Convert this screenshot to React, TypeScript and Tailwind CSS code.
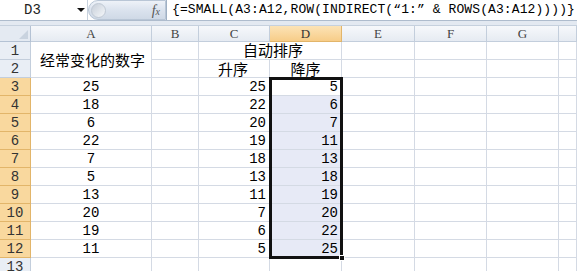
import React from "react";

const cols = ["A", "B", "C", "D", "E", "F", "G", ""];
const colA = [25, 18, 6, 22, 7, 5, 13, 20, 19, 11];
const colC = [25, 22, 20, 19, 18, 13, 11, 7, 6, 5];
const colD = [5, 6, 7, 11, 13, 18, 19, 20, 22, 25];

const cellBase = "border-r border-b border-[#d4dae4] text-[14px] leading-[18px] text-black whitespace-nowrap";
const numFont = { fontFamily: '"Liberation Mono", monospace' };
const cjkFont = { fontFamily: '"Noto Sans CJK SC", sans-serif' };

function RowHeader({ n, sel }: { n: number; sel: boolean }) {
  return (
    <div
      className={`flex items-center justify-center border-r border-b text-[14px] leading-[18px] text-[#333] ${
        sel ? "bg-[#f9d89e] border-[#e2b56a]" : "bg-[#e9eef5] border-[#c3cedc]"
      }`}
      style={numFont}
    >
      {n}
    </div>
  );
}

export default function App() {
  const rows: React.ReactNode[] = [];

  rows.push(
    <div key="corner" className="relative border-r border-b border-[#b4c2d4] bg-[#e4eaf2]">
      <div className="absolute right-[2px] bottom-[2px] w-0 h-0 border-l-[9px] border-l-transparent border-b-[9px] border-b-[#c9d3df]" />
    </div>
  );
  cols.forEach((c) => {
    const sel = c === "D";
    rows.push(
      <div
        key={"h" + c}
        className={`flex items-center justify-center border-r border-b text-[13px] ${
          sel
            ? "bg-gradient-to-b from-[#fce3b6] to-[#f7cd88] border-[#e2b56a] text-[#333]"
            : "bg-gradient-to-b from-[#f6f8fb] to-[#e6ebf2] border-[#c3cedc] text-[#444]"
        }`}
        style={{ fontFamily: '"Liberation Serif", serif' }}
      >
        {c}
      </div>
    );
  });

  rows.push(<RowHeader key="r1" n={1} sel={false} />);
  rows.push(
    <div key="a1" className={`${cellBase} row-span-2 flex items-center pl-[9px] text-[15px]`} style={cjkFont}>
      经常变化的数字
    </div>
  );
  rows.push(<div key="b1" className={cellBase} />);
  rows.push(
    <div key="c1" className={`${cellBase} col-span-2 flex items-end justify-center pl-[6px] text-[15px]`} style={cjkFont}>
      自动排序
    </div>
  );
  ["e1", "f1", "g1", "h1"].forEach((k) => rows.push(<div key={k} className={cellBase} />));

  rows.push(<RowHeader key="r2" n={2} sel={false} />);
  rows.push(<div key="b2" className={cellBase} />);
  rows.push(
    <div key="c2" className={`${cellBase} flex items-center justify-center pr-[2px] text-[15px]`} style={cjkFont}>
      升序
    </div>
  );
  rows.push(
    <div key="d2" className={`${cellBase} flex items-center justify-center text-[15px]`} style={cjkFont}>
      降序
    </div>
  );
  ["e2", "f2", "g2", "h2"].forEach((k) => rows.push(<div key={k} className={cellBase} />));

  for (let i = 0; i < 10; i++) {
    const n = i + 3;
    rows.push(<RowHeader key={"r" + n} n={n} sel={true} />);
    rows.push(
      <div key={"a" + n} className={`${cellBase} text-center`} style={numFont}>
        {colA[i]}
      </div>
    );
    rows.push(<div key={"b" + n} className={cellBase} />);
    rows.push(
      <div key={"c" + n} className={`${cellBase} text-right pr-[3px]`} style={numFont}>
        {colC[i]}
      </div>
    );
    rows.push(
      <div
        key={"d" + n}
        className={`${cellBase} text-right pr-[3px] ${i === 0 ? "bg-white" : "bg-[#e7eaf6]"}`}
        style={numFont}
      >
        {colD[i]}
      </div>
    );
    ["e", "f", "g", "h"].forEach((k) => rows.push(<div key={k + n} className={cellBase} />));
  }

  rows.push(<RowHeader key="r13" n={13} sel={false} />);
  ["a", "b", "c", "d", "e", "f", "g", "h"].forEach((k) => rows.push(<div key={k + "13"} className={cellBase} />));

  return (
    <div className="w-[577px] h-[271px] overflow-hidden bg-white">
      <div className="flex h-[21px] items-stretch border-b border-[#aebccd] bg-white">
        <div className="relative flex w-[88px] items-center border-r border-[#c8d2de]">
          <span className="pl-[24px] text-[14px] text-[#222]" style={numFont}>
            D3
          </span>
          <span className="absolute left-[77px] top-[8px] w-0 h-0 border-l-[4px] border-l-transparent border-r-[4px] border-r-transparent border-t-[4px] border-t-[#111]" />
        </div>
        <div className="flex w-[78px] items-center rounded-l-full bg-gradient-to-b from-[#eef2f8] via-[#dbe3ee] to-[#cfd9e6] border border-[#b9c6d6]">
          <div className="ml-[2px] h-[15px] w-[15px] rounded-full bg-gradient-to-br from-[#c7cfd9] to-[#f5f7fa] border border-[#c0c9d4]" />
          <span
            className="ml-auto mr-[5px] text-[14px] italic text-[#555]"
            style={{ fontFamily: '"Liberation Serif", serif' }}
          >
            f<span className="text-[10px]">x</span>
          </span>
        </div>
        <div className="flex flex-1 items-center pl-[5px] border-l border-[#9fb0c4]">
          <span className="text-[13px] text-black tracking-[0.1px]" style={numFont}>
            {"{=SMALL(A3:A12,ROW(INDIRECT(\u201C1:\u201D & ROWS(A3:A12))))}"}
          </span>
        </div>
      </div>
      <div className="h-[5px] bg-[#e3e9f1] border-b border-[#c6d1de]" />
      <div className="relative">
        <div className="grid grid-cols-[31px_121px_47px_71px_72px_73px_72px_72px_18px] grid-rows-[16px_repeat(13,18px)]">
          {rows}
        </div>
        <div className="pointer-events-none absolute left-[269px] top-[51px] h-[182px] w-[74px] border-[3px] border-[#111]" />
        <div className="pointer-events-none absolute left-[339px] top-[229px] h-[6px] w-[6px] bg-[#111] border border-white" />
      </div>
    </div>
  );
}
